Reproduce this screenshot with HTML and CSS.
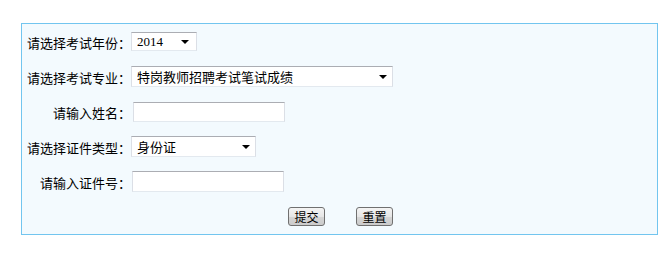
FILE: index.html
```html
<!DOCTYPE html>
<html lang="zh-CN">
<head>
<meta charset="utf-8">
<title>成绩查询</title>
<link rel="stylesheet" href="styles.css">
</head>
<body>
<form class="panel">
  <label class="lbl">请选择考试年份：</label>
  <div class="field"><span class="sel sel-year"><select><option>2014</option></select></span></div>

  <label class="lbl">请选择考试专业：</label>
  <div class="field"><span class="sel sel-major"><select><option>特岗教师招聘考试笔试成绩</option></select></span></div>

  <label class="lbl">请输入姓名：</label>
  <div class="field"><input class="txt txt-name" type="text"></div>

  <label class="lbl">请选择证件类型：</label>
  <div class="field"><span class="sel sel-type"><select><option>身份证</option></select></span></div>

  <label class="lbl">请输入证件号：</label>
  <div class="field"><input class="txt txt-id" type="text"></div>

  <div class="actions">
    <button type="button" class="btn">提交</button>
    <button type="reset" class="btn">重置</button>
  </div>
</form>
</body>
</html>
```
FILE: styles.css
```css
html, body {
  margin: 0;
  padding: 0;
  background: #fff;
}
body {
  font-family: "Noto Sans CJK SC", "Liberation Sans", sans-serif;
  font-size: 13px;
  color: #000;
}
.panel {
  box-sizing: border-box;
  margin: 23px 0 0 21px;
  width: 637px;
  height: 212px;
  border: 1px solid #72c5ef;
  background: #f3fafe;
  display: grid;
  grid-template-columns: 109px 1fr;
  grid-auto-rows: 35px;
  column-gap: 0;
  align-items: center;
}
.lbl {
  text-align: right;
  white-space: nowrap;
  line-height: 17px;
  padding-top: 1px;
}
.field {
  display: flex;
  align-items: center;
}
.sel {
  position: relative;
  display: inline-block;
}
.sel select {
  -webkit-appearance: none;
  appearance: none;
  box-sizing: border-box;
  display: block;
  margin: 0;
  padding: 0 0 0 5px;
  border: 1px solid #dbdfe6;
  border-top-color: #abadb3;
  border-bottom-color: #e3e9ef;
  border-radius: 0;
  background: #fff;
  font-family: "Noto Sans CJK SC", "Liberation Sans", sans-serif;
  font-size: 13px;
  color: #000;
  outline: none;
}
.sel::after {
  content: "";
  position: absolute;
  right: 6px;
  top: 50%;
  margin-top: -2px;
  width: 0;
  height: 0;
  border-left: 4px solid transparent;
  border-right: 4px solid transparent;
  border-top: 4px solid #000;
  pointer-events: none;
}
.sel-year select {
  width: 66px;
  height: 19px;
  font-family: "Liberation Serif", serif;
  font-size: 13px;
  padding-left: 5px;
}
.sel-year::after {
  right: 8px;
}
.sel-major select {
  width: 262px;
  height: 21px;
}
.sel-type select {
  width: 125px;
  height: 21px;
}
.txt {
  box-sizing: border-box;
  margin: 0;
  width: 152px;
  height: 21px;
  padding: 0 3px;
  border: 1px solid #dbdfe6;
  border-top-color: #abadb3;
  border-bottom-color: #e3e9ef;
  background: #fff;
  outline: none;
}
.txt-name {
  margin-left: 2px;
  height: 20px;
}
.txt-id {
  margin-left: 1px;
}
.actions {
  grid-column: 1 / -1;
  display: flex;
  justify-content: center;
  gap: 31px;
  padding-left: 2px;
}
.btn {
  box-sizing: border-box;
  width: 37px;
  height: 19px;
  margin: 0;
  padding: 0;
  border: 1px solid #707070;
  border-radius: 3px;
  background: linear-gradient(#f4f4f4 0%, #e6e6e6 50%, #d6d6d6 51%, #cbcbcb 100%);
  font-family: "Noto Sans CJK SC", "Liberation Sans", sans-serif;
  font-size: 12px;
  line-height: 16px;
  color: #000;
}
```
